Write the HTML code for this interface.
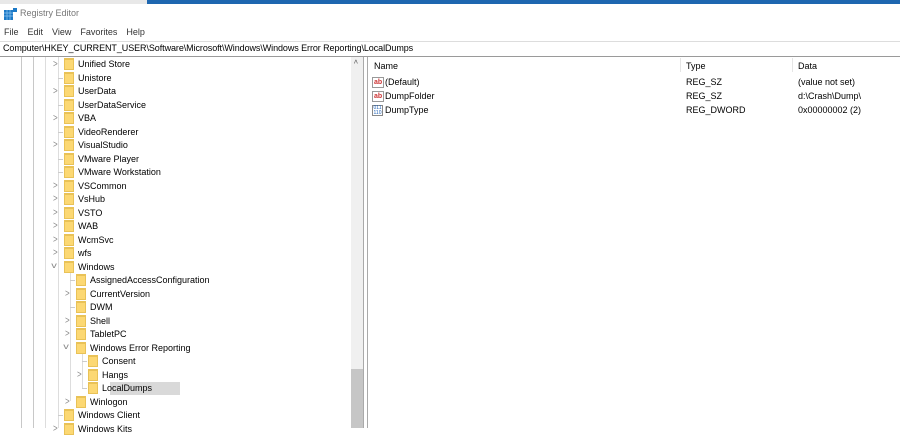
<!DOCTYPE html><html><head><style>
*{margin:0;padding:0;box-sizing:border-box}
body{width:900px;height:428px;overflow:hidden;background:#fff;font-family:"Liberation Sans",sans-serif;font-size:9px;color:#000;position:relative}
.a{position:absolute;white-space:nowrap}
.f{position:absolute;width:10px;height:12px;background:#fcd873;border:1px solid #e9c257;border-top-width:2px}
.c{position:absolute;font-size:8px;color:#888;transform:scaleY(1.3)}
.g{position:absolute;background:#c8c8c8}
</style></head><body>
<div class="a" style="left:0;top:0;width:147px;height:4px;background:#e8e8e8"></div>
<div class="a" style="left:147px;top:0;width:753px;height:4px;background:#1e67b0"></div>
<svg class="a" style="left:4px;top:8px" width="14" height="13"><rect x="0" y="2" width="9" height="10" fill="#1c79c6"/><path d="M3 2v10M6 2v10M0 5h9M0 8h9" stroke="#8cc3ef" stroke-width=".7"/><rect x="9" y="0" width="4" height="4" fill="#1c79c6"/></svg>
<div class="a" style="left:20px;top:8px;color:#777;font-size:9px">Registry Editor</div>
<div class="a" style="left:4px;top:27px;color:#333;font-size:9px;word-spacing:2px">File&nbsp; Edit&nbsp; View&nbsp; Favorites&nbsp; Help</div>
<div class="a" style="left:0;top:41px;width:900px;height:16px;border-top:1px solid #ddd;border-bottom:1px solid #9a9a9a"></div>
<div class="a" style="left:3px;top:43px;font-size:9px;letter-spacing:-0.08px">Computer\HKEY_CURRENT_USER\Software\Microsoft\Windows\Windows Error Reporting\LocalDumps</div>
<div class="g" style="left:21px;top:57px;width:1px;height:371px"></div>
<div class="g" style="left:33px;top:57px;width:1px;height:371px"></div>
<div class="g" style="left:45px;top:57px;width:1px;height:371px;background:#ddd"></div>
<div class="g" style="left:58px;top:57px;width:1px;height:371px;background:#ddd"></div>
<div class="g" style="left:70px;top:273px;width:1px;height:128px;background:#ddd"></div>
<div class="g" style="left:82px;top:354px;width:1px;height:34px;background:#ddd"></div>
<div class="a" style="left:351px;top:57px;width:12px;height:371px;background:#f0f0f0"></div>
<div class="a" style="left:351px;top:369px;width:12px;height:59px;background:#c6c6c6"></div>
<div class="c" style="left:354px;top:59px;color:#555">^</div>
<div class="a" style="left:363px;top:57px;width:1px;height:371px;background:#aaa"></div>
<div class="a" style="left:367px;top:57px;width:1px;height:371px;background:#aaa"></div>
<div id="t"></div>
<div class="a" style="left:374px;top:61px">Name</div>
<div class="a" style="left:686px;top:61px">Type</div>
<div class="a" style="left:798px;top:61px">Data</div>
<div class="a" style="left:680px;top:58px;width:1px;height:14px;background:#e5e5e5"></div>
<div class="a" style="left:792px;top:58px;width:1px;height:14px;background:#e5e5e5"></div>
<div class="a" style="left:372px;top:77px;font-size:7px;color:#c33;border:1px solid #999;line-height:9px;padding:0 1px;font-weight:bold">ab</div>
<div class="a" style="left:385px;top:77px">(Default)</div><div class="a" style="left:686px;top:77px">REG_SZ</div><div class="a" style="left:798px;top:77px">(value not set)</div>
<div class="a" style="left:372px;top:91px;font-size:7px;color:#c33;border:1px solid #999;line-height:9px;padding:0 1px;font-weight:bold">ab</div>
<div class="a" style="left:385px;top:91px">DumpFolder</div><div class="a" style="left:686px;top:91px">REG_SZ</div><div class="a" style="left:798px;top:91px">d:\Crash\Dump\</div>
<div class="a" style="left:372px;top:105px;width:11px;height:11px;border:1px solid #888;font-size:5px;line-height:4.5px;color:#1c5fb5;text-align:center">011<br>110</div>
<div class="a" style="left:385px;top:105px">DumpType</div><div class="a" style="left:686px;top:105px">REG_DWORD</div><div class="a" style="left:798px;top:105px">0x00000002 (2)</div>
<script>
var r=[[1,'>','Unified Store'],[1,'-','Unistore'],[1,'>','UserData'],[1,'-','UserDataService'],[1,'>','VBA'],[1,'-','VideoRenderer'],[1,'>','VisualStudio'],[1,'-','VMware Player'],[1,'-','VMware Workstation'],[1,'>','VSCommon'],[1,'>','VsHub'],[1,'>','VSTO'],[1,'>','WAB'],[1,'>','WcmSvc'],[1,'>','wfs'],[1,'v','Windows'],[2,'-','AssignedAccessConfiguration'],[2,'>','CurrentVersion'],[2,'-','DWM'],[2,'>','Shell'],[2,'>','TabletPC'],[2,'v','Windows Error Reporting'],[3,'-','Consent'],[3,'>','Hangs'],[3,'-','LocalDumps'],[2,'>','Winlogon'],[1,'-','Windows Client'],[1,'>','Windows Kits']];
var h='';r.forEach(function(e,i){var y=58+i*13.5,x=(e[0]-1)*12;
if(e[2]=='LocalDumps')h+='<div class="a" style="left:'+(x+86)+'px;top:'+(y)+'px;width:70px;height:13px;background:#d9d9d9"></div>';
if(e[1]=='>')h+='<div class="c" style="left:'+(x+53)+'px;top:'+(y+1)+'px">&gt;</div>';
else if(e[1]=='v')h+='<div class="c" style="left:'+(x+52)+'px;top:'+(y)+'px;transform:scaleX(1.4)">v</div>';
else h+='<div class="a" style="left:'+(x+58)+'px;top:'+(y+6)+'px;width:5px;height:1px;background:#ccc"></div>';
h+='<div class="f" style="left:'+(x+64)+'px;top:'+(y)+'px"></div><div class="a" style="left:'+(x+78)+'px;top:'+(y+1)+'px">'+e[2]+'</div>';});
document.getElementById('t').innerHTML=h;
</script>
</body></html>
